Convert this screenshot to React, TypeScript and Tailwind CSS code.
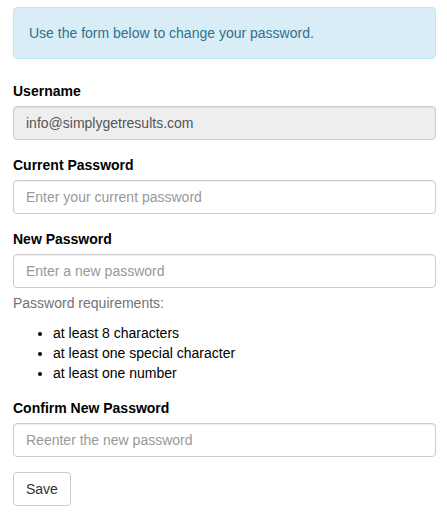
import React from 'react';

const inputBase =
  'block w-full h-[34px] px-3 py-[6px] text-[14px] leading-[20px] text-[#555] border border-[#ccc] rounded-[4px] shadow-[inset_0_1px_1px_rgba(0,0,0,0.075)] placeholder:text-[#999] outline-none';

const Field: React.FC<{ label: string; children: React.ReactNode }> = ({ label, children }) => (
  <div className="mb-[15px]">
    <label className="block mb-[5px] font-bold text-[14px] leading-[20px] text-black">{label}</label>
    {children}
  </div>
);

export default function App() {
  return (
    <div
      className="px-[13px] pt-[7px] text-[14px] leading-[20px] text-[#333] bg-white"
      style={{ fontFamily: '"Liberation Sans", Arial, sans-serif', width: 447 }}
    >
      <div className="w-[423px]">
        <div className="mb-[22px] p-[15px] border border-[#bce8f1] bg-[#d9edf7] text-[#31708f] rounded-[4px]">
          Use the form below to change your password.
        </div>

        <form onSubmit={(e) => e.preventDefault()}>
          <Field label="Username">
            <input
              className={`${inputBase} bg-[#eee] cursor-not-allowed`}
              value="info@simplygetresults.com"
              disabled
              readOnly
            />
          </Field>

          <Field label="Current Password">
            <input type="password" className={`${inputBase} bg-white`} placeholder="Enter your current password" />
          </Field>

          <div className="mb-[15px]">
            <label className="block mb-[5px] font-bold text-[14px] leading-[20px] text-black">New Password</label>
            <input type="password" className={`${inputBase} bg-white`} placeholder="Enter a new password" />
            <p className="mt-[5px] mb-[10px] text-[#737373]">Password requirements:</p>
            <ul className="list-disc pl-10 text-black">
              <li>at least 8 characters</li>
              <li>at least one special character</li>
              <li>at least one number</li>
            </ul>
          </div>

          <Field label="Confirm New Password">
            <input type="password" className={`${inputBase} bg-white`} placeholder="Reenter the new password" />
          </Field>

          <button
            type="submit"
            className="h-[34px] px-3 py-[6px] text-[14px] leading-[20px] text-[#333] bg-white border border-[#ccc] rounded-[4px]"
          >
            Save
          </button>
        </form>
      </div>
    </div>
  );
}
